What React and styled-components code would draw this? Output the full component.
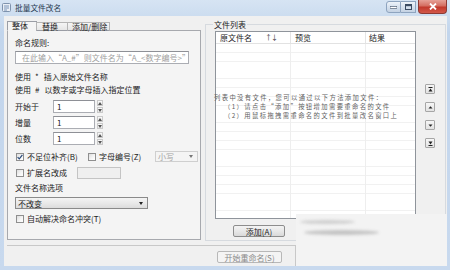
import React from 'react';
import styled, { createGlobalStyle } from 'styled-components';

const FONT = `"Noto Sans CJK SC", "Noto Sans", sans-serif`;

const GlobalStyle = createGlobalStyle`
  * { box-sizing: border-box; }
  html, body { margin: 0; padding: 0; background: #c6d8ed; }
  body { font-family: ${FONT}; }
`;

const Window = styled.div`
  position: relative;
  width: 450px;
  height: 270px;
  display: flex;
  flex-direction: column;
  background: linear-gradient(180deg, #d6e4f3 0%, #c2d5ec 12%, #c8d9ee 100%);
  overflow: hidden;
  font-family: ${FONT};
  font-size: 8px;
  color: #222;
`;

const TitleBar = styled.div`
  height: 16px;
  display: flex;
  align-items: flex-start;
  padding-left: 2px;
`;

const AppIcon = styled.svg`
  flex: none;
  margin-top: 3px;
`;

const Title = styled.div`
  margin-left: 4px;
  margin-top: 3px;
  font-size: 7.7px;
  line-height: 9px;
  color: #24384f;
`;

const Controls = styled.div`
  margin-left: auto;
  margin-right: 3px;
  display: flex;
  align-items: flex-start;
`;

const CtrlBtn = styled.div`
  width: 15px;
  height: 12px;
  margin-top: 1px;
  border: 1px solid #8ea4bf;
  border-left-width: ${p => (p.$first ? 1 : 0)}px;
  background: linear-gradient(180deg, #eef3f9 0%, #d6e1ee 50%, #c4d2e3 100%);
  display: flex;
  align-items: center;
  justify-content: center;
  border-radius: ${p => (p.$first ? '3px 0 0 3px' : '0')};
`;

const CloseBtn = styled.div`
  width: 29px;
  height: 14px;
  margin-left: 2px;
  border: 1px solid #8d3a34;
  border-top: none;
  border-radius: 0 0 4px 4px;
  background: linear-gradient(180deg, #e6a197 0%, #d46e61 45%, #c2392c 55%, #d2584a 100%);
  display: flex;
  align-items: center;
  justify-content: center;
`;

const Client = styled.div`
  flex: 1;
  margin: 0 3px 4px 4px;
  background: #f0f0f0;
  display: flex;
  flex-direction: column;
`;

const Main = styled.div`
  height: 230px;
  margin: 0 1px 0 3px;
  padding-top: 5px;
  display: flex;
  border-bottom: 1px solid #c8c8c8;
`;

const LeftCol = styled.div`
  width: 194px;
  display: flex;
  flex-direction: column;
`;

const TabRow = styled.div`
  height: 10px;
  margin-bottom: -1px;
  display: flex;
  align-items: flex-end;
  position: relative;
  z-index: 1;
`;

const Tab = styled.div`
  width: ${p => p.$w}px;
  height: ${p => (p.$active ? 10 : 9)}px;
  margin-left: ${p => (p.$first ? 0 : -1)}px;
  border: 1px solid ${p => (p.$active ? '#9a9da5' : '#b5b5b5')};
  border-bottom-color: ${p => (p.$active ? '#f4f4f4' : '#9a9da5')};
  background: ${p =>
    p.$active ? '#f4f4f4' : 'linear-gradient(180deg, #f5f5f5 0%, #e6e6e6 100%)'};
  padding-left: ${p => p.$pad}px;
  font-size: 8px;
  line-height: ${p => (p.$active ? 8 : 7)}px;
  white-space: nowrap;
  color: #222;
`;

const Panel = styled.div`
  flex: 1;
  margin-bottom: 5px;
  border: 1px solid #a7a9ae;
  background: #f4f4f4;
  padding: 7px 0 0 7px;
  display: flex;
  flex-direction: column;
`;

const Text = styled.div`
  height: 9px;
  line-height: 9px;
  font-size: 8px;
  white-space: nowrap;
  margin-top: ${p => p.$mt || 0}px;
  color: #222;
`;

const Sym = styled.span`
  margin: 0 5px 0 4px;
`;

const TextInput = styled.div`
  width: ${p => p.$w}px;
  height: ${p => p.$h || 13}px;
  margin-top: ${p => p.$mt || 0}px;
  margin-left: ${p => p.$ml || 0}px;
  border: 1px solid ${p => (p.$disabled ? '#c4c4c4' : '#abadb3')};
  border-top-color: ${p => (p.$disabled ? '#c4c4c4' : '#8e9096')};
  background: ${p => (p.$disabled ? '#efefef' : '#fff')};
  padding-left: ${p => p.$pl || 3}px;
  font-size: 8px;
  line-height: ${p => (p.$h || 13) - 2}px;
  color: ${p => (p.$placeholder ? '#a0a0a0' : '#222')};
  white-space: nowrap;
  overflow: hidden;
  flex: none;
`;

const FieldRow = styled.div`
  display: flex;
  align-items: center;
  height: 13px;
  margin-top: ${p => p.$mt || 0}px;
`;

const FieldLabel = styled.div`
  width: 38px;
  font-size: 8px;
  line-height: 9px;
`;

const Spinner = styled.div`
  width: 6px;
  height: 13px;
  margin-left: 2px;
  display: flex;
  flex-direction: column;
  gap: 1px;
`;

const SpinHalf = styled.div`
  flex: 1;
  border: 1px solid #c9c9c9;
  background: linear-gradient(180deg, #fafafa, #e8e8e8);
  display: flex;
  align-items: center;
  justify-content: center;
`;

const CheckRow = styled.div`
  display: flex;
  align-items: center;
  height: 11px;
  margin-top: ${p => p.$mt || 0}px;
  padding-left: 1px;
`;

const Box = styled.div`
  width: 8px;
  height: 8px;
  flex: none;
  border: 1px solid #8f8f8f;
  background: linear-gradient(135deg, #dedede 0%, #f6f6f6 60%, #ffffff 100%);
  display: flex;
  align-items: center;
  justify-content: center;
`;

const CheckText = styled.span`
  margin-left: 3px;
  font-size: 8px;
  line-height: 9px;
  white-space: nowrap;
  width: ${p => (p.$w ? `${p.$w}px` : 'auto')};
  flex: none;
`;

const Select = styled.div`
  width: ${p => p.$w}px;
  height: ${p => p.$h || 11}px;
  margin-left: ${p => p.$ml || 0}px;
  margin-top: ${p => p.$mt || 0}px;
  border: 1px solid ${p => (p.$disabled ? '#cfcfcf' : '#8a8a8a')};
  background: ${p =>
    p.$disabled ? '#f4f4f4' : 'linear-gradient(180deg, #f4f4f4 0%, #e9e9e9 50%, #dcdcdc 100%)'};
  display: flex;
  align-items: center;
  padding: 0 4px 0 2px;
  font-size: 8px;
  color: ${p => (p.$disabled ? '#a3a3a3' : '#222')};
  flex: none;
`;

const SelectArrow = styled.svg`
  margin-left: auto;
`;

const GroupBox = styled.div`
  width: 241px;
  margin: 3px 0 4px 4px;
  border: 1px solid #d6dadf;
  display: flex;
  flex-direction: column;
  padding-left: 9px;
`;

const GroupLabel = styled.div`
  align-self: flex-start;
  margin: -5px 0 0 -2px;
  padding: 0 1px;
  background: #f0f0f0;
  font-size: 8px;
  line-height: 9px;
`;

const GroupBody = styled.div`
  display: flex;
  margin-top: 2px;
`;

const ListCol = styled.div`
  width: 201px;
  display: flex;
  flex-direction: column;
`;

const List = styled.div`
  height: 188px;
  border: 1px solid #8f949b;
  background: #fff;
  display: flex;
  flex-direction: column;
`;

const ListHeader = styled.div`
  height: 12px;
  display: flex;
  border-bottom: 1px solid #e2e2e2;
`;

const HeadCell = styled.div`
  width: ${p => (p.$w ? `${p.$w}px` : 'auto')};
  flex: ${p => (p.$w ? 'none' : 1)};
  display: flex;
  align-items: center;
  padding-left: ${p => p.$pl}px;
  border-right: ${p => (p.$last ? 'none' : '1px solid #e4e4e4')};
  font-size: 8px;
  line-height: 9px;
  white-space: nowrap;
`;

const SortMark = styled.span`
  margin-left: 13px;
  font-size: 7px;
  letter-spacing: -1px;
  color: #333;
`;

const ListBody = styled.div`
  flex: 1;
  padding-top: 49px;
  background:
    linear-gradient(to right, transparent 74px, #eeeeee 74px, #eeeeee 75px, transparent 75px,
      transparent 149px, #eeeeee 149px, #eeeeee 150px, transparent 150px),
    repeating-linear-gradient(180deg, #ffffff 0px, #ffffff 8px, #f1f1f1 8px, #f1f1f1 8.8px);
`;

const EmptyLine = styled.div`
  height: 9px;
  line-height: 9px;
  font-size: 6.3px;
  letter-spacing: 1.4px;
  color: #5f5f5f;
  white-space: nowrap;
  margin-left: ${p => p.$indent}px;
`;

const PushButton = styled.div`
  width: ${p => p.$w}px;
  height: 12px;
  margin-top: ${p => p.$mt || 0}px;
  margin-left: ${p => p.$ml || 0}px;
  border: 1px solid ${p => (p.$disabled ? '#b8b8b8' : '#8d8d8d')};
  border-radius: 2px;
  background: ${p =>
    p.$disabled ? '#f4f4f4' : 'linear-gradient(180deg, #f3f3f3 0%, #e8e8e8 50%, #d9d9d9 100%)'};
  display: flex;
  align-items: center;
  justify-content: center;
  font-size: 8px;
  line-height: 9px;
  color: ${p => (p.$disabled ? '#8a8a8a' : '#222')};
  white-space: nowrap;
  flex: none;
`;

const MoveCol = styled.div`
  margin-left: 9px;
  padding-top: 53px;
  display: flex;
  flex-direction: column;
  gap: 8px;
`;

const MoveBtn = styled.div`
  width: 10px;
  height: 10px;
  border: 1px solid #a6a6a6;
  border-radius: 1px;
  background: linear-gradient(180deg, #f6f6f6 0%, #e2e2e2 100%);
  display: flex;
  align-items: center;
  justify-content: center;
`;

const Footer = styled.div`
  flex: 1;
  padding: 5px 0 0 213px;
  display: flex;
`;

const Smudge = styled.div`
  position: absolute;
  left: 296px;
  top: 214px;
  width: 151px;
  height: 52px;
  background: #f3f3f3;
  &::before {
    content: '';
    position: absolute;
    left: -1px;
    top: 31px;
    width: 1px;
    height: 21px;
    background: #c8c8c8;
  }
`;

const Streak = styled.div`
  position: absolute;
  left: ${p => p.$x}px;
  top: ${p => p.$y}px;
  width: ${p => p.$w}px;
  height: ${p => p.$h}px;
  border-radius: 50%;
  background: ${p => p.$c};
  filter: blur(1.5px);
`;

const Check = () => (
  <svg width="6" height="6" viewBox="0 0 6 6">
    <path d="M0.6 3.1 L2.3 4.8 L5.4 0.9" stroke="#2a4a7a" strokeWidth="1.2" fill="none" />
  </svg>
);

const Tri = ({ up, color = '#333' }) => (
  <svg width="4" height="3" viewBox="0 0 4 3">
    <path d={up ? 'M0 3 L2 0 L4 3 Z' : 'M0 0 L4 0 L2 3 Z'} fill={color} />
  </svg>
);

const CheckBox = ({ checked, children, w }) => (
  <>
    <Box>{checked && <Check />}</Box>
    <CheckText $w={w}>{children}</CheckText>
  </>
);

const NumberField = ({ label, value, mt }) => (
  <FieldRow $mt={mt}>
    <FieldLabel>{label}</FieldLabel>
    <TextInput $w={42}>{value}</TextInput>
    <Spinner>
      <SpinHalf><Tri up color="#555" /></SpinHalf>
      <SpinHalf><Tri color="#555" /></SpinHalf>
    </Spinner>
  </FieldRow>
);

const MoveIcon = ({ kind }) => (
  <svg width="5" height="5" viewBox="0 0 5 5">
    {kind === 'top' && <><rect x="0.5" y="0" width="4" height="1" fill="#222" /><path d="M0.5 4.5 L2.5 1.6 L4.5 4.5 Z" fill="#222" /></>}
    {kind === 'up' && <path d="M0.5 3.6 L2.5 1.2 L4.5 3.6 Z" fill="#222" />}
    {kind === 'down' && <path d="M0.5 1.4 L4.5 1.4 L2.5 3.8 Z" fill="#222" />}
    {kind === 'bottom' && <><path d="M0.5 0.5 L4.5 0.5 L2.5 3.4 Z" fill="#222" /><rect x="0.5" y="4" width="4" height="1" fill="#222" /></>}
  </svg>
);

export default function App() {
  return (
    <>
      <GlobalStyle />
      <Window>
        <TitleBar>
          <AppIcon width="9" height="9" viewBox="0 0 9 9">
            <rect x="0.5" y="0.5" width="8" height="8" rx="1" fill="#e9eef5" stroke="#7f93ad" />
            <path d="M2 3h5M2 5h5M2 7h3" stroke="#5d7ea8" strokeWidth="0.8" />
          </AppIcon>
          <Title>批量文件改名</Title>
          <Controls>
            <CtrlBtn $first>
              <svg width="7" height="3" viewBox="0 0 7 3"><rect x="0" y="0.5" width="7" height="2" fill="#fff" stroke="#3b4c63" strokeWidth="0.6" /></svg>
            </CtrlBtn>
            <CtrlBtn>
              <svg width="7" height="6" viewBox="0 0 7 6"><rect x="0.5" y="0.5" width="6" height="5" fill="none" stroke="#3b4c63" strokeWidth="1" /><rect x="1" y="1" width="5" height="1.2" fill="#3b4c63" /></svg>
            </CtrlBtn>
            <CloseBtn>
              <svg width="8" height="7" viewBox="0 0 8 7"><path d="M1 0.5 L7 6.5 M7 0.5 L1 6.5" stroke="#fff" strokeWidth="1.8" /></svg>
            </CloseBtn>
          </Controls>
        </TitleBar>

        <Client>
          <Main>
            <LeftCol>
              <TabRow>
                <Tab $first $active $w={30} $pad={4}>整体</Tab>
                <Tab $w={32} $pad={5}>替换</Tab>
                <Tab $w={43} $pad={4}>添加/删除</Tab>
              </TabRow>
              <Panel>
                <Text>命名规则:</Text>
                <TextInput $w={174} $h={13} $mt={4} $pl={6} $placeholder>
                  在此输入“A_#”则文件名为“A_&lt;数字编号&gt;”
                </TextInput>
                <Text $mt={8}>使用<Sym>*</Sym>插入原始文件名称</Text>
                <Text $mt={4}>使用<Sym>#</Sym>以数字或字母插入指定位置</Text>
                <NumberField label="开始于" value="1" mt={6} />
                <NumberField label="增量" value="1" mt={3} />
                <NumberField label="位数" value="1" mt={3} />
                <CheckRow $mt={6}>
                  <CheckBox checked w={61}>不足位补齐(B)</CheckBox>
                  <CheckBox w={52}>字母编号(Z)</CheckBox>
                  <Select $w={43} $ml={4} $disabled>
                    小写
                    <SelectArrow width="4" height="3" viewBox="0 0 4 3"><path d="M0 0 L4 0 L2 3 Z" fill="#777" /></SelectArrow>
                  </Select>
                </CheckRow>
                <CheckRow $mt={5}>
                  <CheckBox w={50}>扩展名改成</CheckBox>
                  <TextInput $w={44} $h={12} $disabled />
                </CheckRow>
                <Text $mt={5}>文件名称选项</Text>
                <Select $w={133} $h={12} $mt={5}>
                  不改变
                  <SelectArrow width="4" height="3" viewBox="0 0 4 3"><path d="M0 0 L4 0 L2 3 Z" fill="#222" /></SelectArrow>
                </Select>
                <CheckRow $mt={4}>
                  <CheckBox>自动解决命名冲突(T)</CheckBox>
                </CheckRow>
              </Panel>
            </LeftCol>

            <GroupBox>
              <GroupLabel>文件列表</GroupLabel>
              <GroupBody>
                <ListCol>
                  <List>
                    <ListHeader>
                      <HeadCell $w={75} $pl={4}>原文件名<SortMark>↑↓</SortMark></HeadCell>
                      <HeadCell $w={75} $pl={4}>预览</HeadCell>
                      <HeadCell $pl={3} $last>结果</HeadCell>
                    </ListHeader>
                    <ListBody>
                      <EmptyLine $indent={-2}>列表中没有文件，您可以通过以下方法添加文件：</EmptyLine>
                      <EmptyLine $indent={8}>（1）请点击“添加”按钮增加需要重命名的文件</EmptyLine>
                      <EmptyLine $indent={8}>（2）用鼠标拖拽需重命名的文件到批量改名窗口上</EmptyLine>
                    </ListBody>
                  </List>
                  <PushButton $w={52} $mt={6} $ml={18}>添加(A)</PushButton>
                </ListCol>
                <MoveCol>
                  <MoveBtn><MoveIcon kind="top" /></MoveBtn>
                  <MoveBtn><MoveIcon kind="up" /></MoveBtn>
                  <MoveBtn><MoveIcon kind="down" /></MoveBtn>
                  <MoveBtn><MoveIcon kind="bottom" /></MoveBtn>
                </MoveCol>
              </GroupBody>
            </GroupBox>
          </Main>
          <Footer>
            <PushButton $w={65} $disabled>开始重命名(S)</PushButton>
          </Footer>
        </Client>

        <Smudge>
          <Streak $x={4} $y={6} $w={55} $h={4} $c="#cfcfcf" />
          <Streak $x={8} $y={16} $w={75} $h={5} $c="#c4c4c4" />
        </Smudge>
      </Window>
    </>
  );
}
